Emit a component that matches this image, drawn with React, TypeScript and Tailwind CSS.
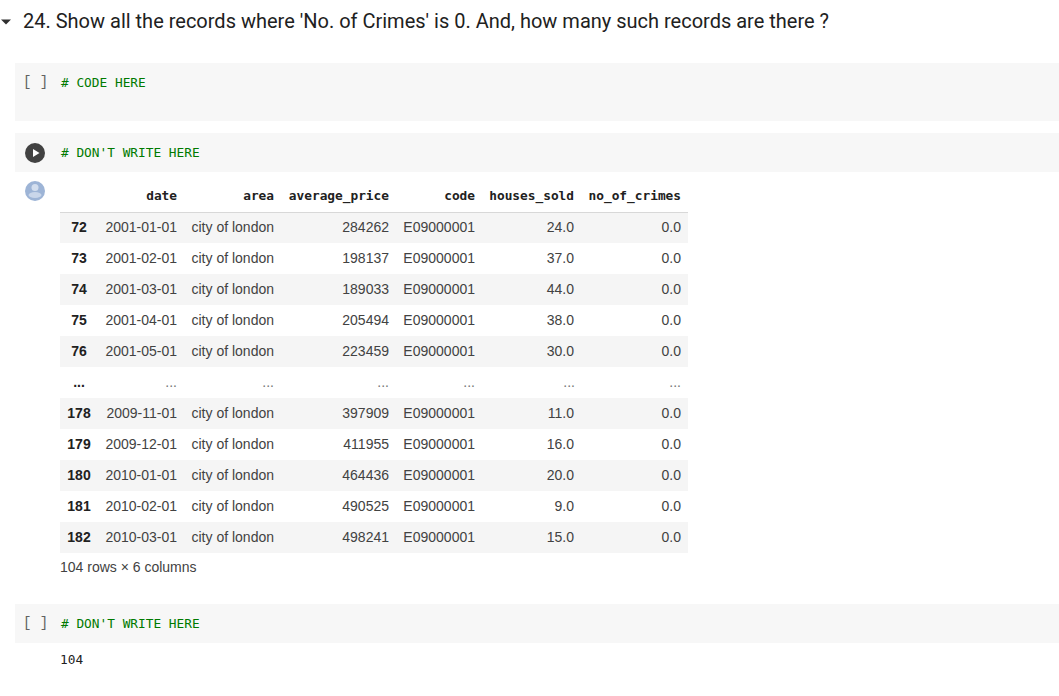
const top = [
  ["72", "2001-01-01", "284262", "24.0"],
  ["73", "2001-02-01", "198137", "37.0"],
  ["74", "2001-03-01", "189033", "44.0"],
  ["75", "2001-04-01", "205494", "38.0"],
  ["76", "2001-05-01", "223459", "30.0"],
]
const bottom = [
  ["178", "2009-11-01", "397909", "11.0"],
  ["179", "2009-12-01", "411955", "16.0"],
  ["180", "2010-01-01", "464436", "20.0"],
  ["181", "2010-02-01", "490525", "9.0"],
  ["182", "2010-03-01", "498241", "15.0"],
]
const heads = ["date", "area", "average_price", "code", "houses_sold", "no_of_crimes"]

function Row({ r, striped }: { r: string[]; striped: boolean }) {
  return (
    <tr className={striped ? "h-[31px] bg-[#f5f5f5]" : "h-[31px] bg-white"}>
      <th className="text-center font-bold text-[#212121]">{r[0]}</th>
      <td className="pr-[7px] text-right">{r[1]}</td>
      <td className="pr-[7px] text-right">city of london</td>
      <td className="pr-[7px] text-right">{r[2]}</td>
      <td className="pr-[7px] text-right">E09000001</td>
      <td className="pr-[8px] text-right">{r[3]}</td>
      <td className="pr-[7px] text-right">0.0</td>
    </tr>
  )
}

function Brackets() {
  return <span className="w-[46px] pl-2 font-['Liberation_Mono',monospace] text-[14px] whitespace-pre text-[#616161]">{"[ ]"}</span>
}

export default function App() {
  return (
    <div className="h-[696px] w-[1059px] overflow-hidden bg-white font-['Liberation_Sans',sans-serif]">
      {/* heading */}
      <div className="flex h-[42px] items-center">
        <svg width="23" height="10" viewBox="0 0 23 10" className="shrink-0">
          <path d="M1 3.500h10l-5 5z" fill="#303030" />
        </svg>
        <h2 className="font-['Roboto',sans-serif] text-[20px] text-[#212121]">
          24. Show all the records where 'No. of Crimes' is 0. And, how many such records are there ?
        </h2>
      </div>

      {/* empty code cell */}
      <div className="mt-[21px] ml-[15px] flex h-[58px] items-start bg-[#f7f7f7] pt-[11px] font-['DejaVu_Sans_Mono',monospace] text-[12.8px] leading-[17px]">
        <Brackets />
        <span className="text-[#007a00]"># CODE HERE</span>
      </div>

      {/* cell with table */}
      <div className="mt-3 ml-[15px] flex h-[39px] items-center bg-[#f7f7f7] font-['DejaVu_Sans_Mono',monospace] text-[12.8px]">
        <div className="w-[46px] pl-[10px]">
          <svg width="20" height="20" viewBox="0 0 20 20">
            <circle cx="10" cy="10" r="10" fill="#424242" />
            <path d="M8 6v8l6.500-4z" fill="#fff" />
          </svg>
        </div>
        <span className="text-[#007a00]"># DON'T WRITE HERE</span>
      </div>

      <div className="flex">
        <div className="w-[60px] pt-[9px] pl-[25px]">
          <svg width="20" height="20" viewBox="0 0 20 20">
            <circle cx="10" cy="10" r="10" fill="#9db4d6" />
            <circle cx="10" cy="6.500" r="3.500" fill="#d3deee" />
            <ellipse cx="10" cy="14" rx="6.500" ry="3" fill="#c9d6ea" />
          </svg>
        </div>
        <div className="pt-2">
          <table className="w-[628px] table-fixed border-collapse text-[14px] text-[#424242]">
            <colgroup>
              <col className="w-[38px]" />
              <col className="w-[86px]" />
              <col className="w-[97px]" />
              <col className="w-[115px]" />
              <col className="w-[86px]" />
              <col className="w-[100px]" />
              <col className="w-[106px]" />
            </colgroup>
            <thead>
              <tr className="h-[32px] border-b border-[#d8d8d8]">
                <th></th>
                {heads.map((h) => (
                  <th
                    key={h}
                    className={
                      h === "houses_sold"
                        ? "pr-[8px] pb-px text-right font-['DejaVu_Sans_Mono',monospace] text-[12.8px] font-bold text-[#212121]"
                        : "pr-[7px] pb-px text-right font-['DejaVu_Sans_Mono',monospace] text-[12.8px] font-bold text-[#212121]"
                    }
                  >
                    {h}
                  </th>
                ))}
              </tr>
            </thead>
            <tbody>
              {top.map((r, i) => (
                <Row key={r[0]} r={r} striped={i % 2 === 0} />
              ))}
              <tr className="h-[31px] bg-white">
                <th className="text-center font-bold text-[#212121]">...</th>
                {heads.map((h) => (
                  <td key={h} className="pr-[7px] text-right text-[#757575]">...</td>
                ))}
              </tr>
              {bottom.map((r, i) => (
                <Row key={r[0]} r={r} striped={i % 2 === 0} />
              ))}
            </tbody>
          </table>
          <p className="mt-[6px] text-[14px] leading-[16px] text-[#424242]">104 rows × 6 columns</p>
        </div>
      </div>

      {/* last cell */}
      <div className="mt-[29px] ml-[15px] flex h-[39px] items-center bg-[#f7f7f7] font-['DejaVu_Sans_Mono',monospace] text-[12.8px]">
        <Brackets />
        <span className="text-[#007a00]"># DON'T WRITE HERE</span>
      </div>
      <p className="mt-2 ml-[60px] font-['DejaVu_Sans_Mono',monospace] text-[12.8px] leading-[17px] text-[#212121]">104</p>
    </div>
  )
}
